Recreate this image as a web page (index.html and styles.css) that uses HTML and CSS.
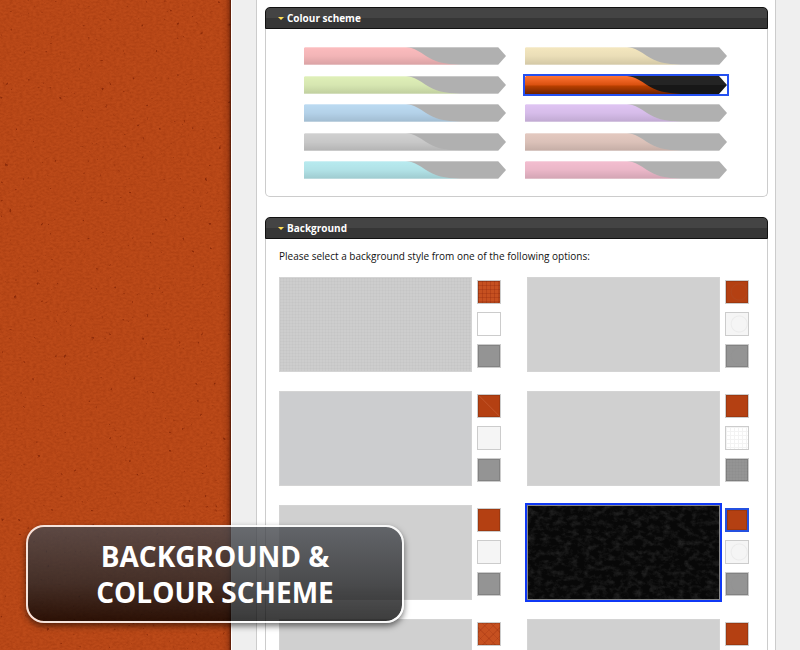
FILE: index.html
```html
<!DOCTYPE html>
<html lang="en">
<head>
<meta charset="utf-8">
<title>Background &amp; colour scheme</title>
<link rel="stylesheet" href="styles.css">
</head>
<body>
<svg class="defs" aria-hidden="true">
  <defs>
    <linearGradient id="shade" x1="0" y1="0" x2="0" y2="1">
      <stop offset="0" stop-color="#000" stop-opacity="0"/>
      <stop offset=".5" stop-color="#000" stop-opacity=".04"/>
      <stop offset="1" stop-color="#000" stop-opacity=".14"/>
    </linearGradient>
    <linearGradient id="ember" x1="0" y1="0" x2="0" y2="1">
      <stop offset="0" stop-color="#ff7434"/>
      <stop offset=".5" stop-color="#d9500f"/>
      <stop offset=".55" stop-color="#b84000"/>
      <stop offset="1" stop-color="#6e2200"/>
    </linearGradient>
    <linearGradient id="coal" x1="0" y1="0" x2="0" y2="1">
      <stop offset=".5" stop-color="#242424"/>
      <stop offset=".5" stop-color="#171717"/>
    </linearGradient>
    <filter id="grain" x="0" y="0" width="100%" height="100%" color-interpolation-filters="sRGB">
      <feTurbulence type="fractalNoise" baseFrequency=".3 .5" numOctaves="2" seed="4"/>
      <feColorMatrix values="0 0 0 0 .5  0 0 0 0 .13  0 0 0 0 0  1.2 0 0 0 -.4"/>
    </filter>
    <filter id="speck" x="0" y="0" width="100%" height="100%" color-interpolation-filters="sRGB">
      <feTurbulence type="fractalNoise" baseFrequency=".22" numOctaves="2" seed="21"/>
      <feColorMatrix values="0 0 0 0 .45  0 0 0 0 .1  0 0 0 0 0  9 0 0 0 -6.7"/>
    </filter>
    <filter id="leather" x="0" y="0" width="100%" height="100%" color-interpolation-filters="sRGB">
      <feTurbulence type="fractalNoise" baseFrequency=".14 .2" numOctaves="4" seed="3"/>
      <feColorMatrix values="0 0 0 0 .4  0 0 0 0 .4  0 0 0 0 .4  1.2 0 0 0 -.5"/>
    </filter>
    <symbol id="ribbon" viewBox="0 0 202 18" preserveAspectRatio="none">
      <path fill="#b0b0b0" d="M90 0H194L202 9L194 18H90Z"/>
      <path fill="currentColor" d="M0 1L1 0H102C111 1 116 5 122 9C131 15 140 17 156 18H0Z"/>
      <path fill="url(#shade)" d="M0 1L1 0H102C111 1 116 5 122 9C131 15 140 17 156 18H0Z"/>
      <path fill="#fff" fill-opacity=".3" d="M0 0H194L195 1H0ZM0 17H195L194 18H0Z"/>
    </symbol>
    <symbol id="ribbon-active" viewBox="0 0 202 18" preserveAspectRatio="none">
      <path fill="url(#coal)" d="M90 0H194L202 9L194 18H90Z"/>
      <path fill="url(#ember)" d="M0 1L1 0H102C111 1 116 5 122 9C131 15 140 17 156 18H0Z"/>
    </symbol>
  </defs>
</svg>

<div class="app">
  <aside class="backdrop">
    <svg class="texture" aria-hidden="true">
      <rect width="100%" height="100%" filter="url(#grain)" opacity=".4"/>
      <rect width="100%" height="100%" filter="url(#speck)" opacity=".6"/>
    </svg>
  </aside>

  <main class="stage">
    <div class="sheet">
      <section class="panel">
        <h2 class="panel-title"><button type="button" aria-expanded="true">Colour scheme</button></h2>
        <div class="schemes">
          <button type="button" class="scheme red" aria-label="Red"><svg><use href="#ribbon"/></svg></button>
          <button type="button" class="scheme sand" aria-label="Sand"><svg><use href="#ribbon"/></svg></button>
          <button type="button" class="scheme green" aria-label="Green"><svg><use href="#ribbon"/></svg></button>
          <button type="button" class="scheme selected" aria-label="Orange" aria-pressed="true"><svg><use href="#ribbon-active"/></svg></button>
          <button type="button" class="scheme blue" aria-label="Blue"><svg><use href="#ribbon"/></svg></button>
          <button type="button" class="scheme violet" aria-label="Violet"><svg><use href="#ribbon"/></svg></button>
          <button type="button" class="scheme silver" aria-label="Silver"><svg><use href="#ribbon"/></svg></button>
          <button type="button" class="scheme brown" aria-label="Brown"><svg><use href="#ribbon"/></svg></button>
          <button type="button" class="scheme aqua" aria-label="Aqua"><svg><use href="#ribbon"/></svg></button>
          <button type="button" class="scheme pink" aria-label="Pink"><svg><use href="#ribbon"/></svg></button>
        </div>
      </section>

      <section class="panel">
        <h2 class="panel-title"><button type="button" aria-expanded="true">Background</button></h2>
        <div class="backgrounds">
          <p>Please select a background style from one of the following options:</p>
          <div class="options">
            <div class="option">
              <button type="button" class="preview weave" aria-label="Weave"></button>
              <div class="swatches">
                <button type="button" class="swatch orange weave" aria-label="Weave, orange"></button>
                <button type="button" class="swatch white" aria-label="Weave, white"></button>
                <button type="button" class="swatch grey" aria-label="Weave, grey"></button>
              </div>
            </div>
            <div class="option">
              <button type="button" class="preview pale" aria-label="Honeycomb"></button>
              <div class="swatches">
                <button type="button" class="swatch rust hex" aria-label="Honeycomb, orange"></button>
                <button type="button" class="swatch light hex" aria-label="Honeycomb, white"></button>
                <button type="button" class="swatch grey hex" aria-label="Honeycomb, grey"></button>
              </div>
            </div>
            <div class="option">
              <button type="button" class="preview cool" aria-label="Facets"></button>
              <div class="swatches">
                <button type="button" class="swatch rust crease" aria-label="Facets, orange"></button>
                <button type="button" class="swatch light" aria-label="Facets, white"></button>
                <button type="button" class="swatch grey" aria-label="Facets, grey"></button>
              </div>
            </div>
            <div class="option">
              <button type="button" class="preview pale" aria-label="Linen"></button>
              <div class="swatches">
                <button type="button" class="swatch rust" aria-label="Linen, orange"></button>
                <button type="button" class="swatch white grid" aria-label="Linen, white"></button>
                <button type="button" class="swatch grey weave" aria-label="Linen, grey"></button>
              </div>
            </div>
            <div class="option">
              <button type="button" class="preview pale" aria-label="Paper"></button>
              <div class="swatches">
                <button type="button" class="swatch rust" aria-label="Paper, orange"></button>
                <button type="button" class="swatch light" aria-label="Paper, white"></button>
                <button type="button" class="swatch grey" aria-label="Paper, grey"></button>
              </div>
            </div>
            <div class="option">
              <button type="button" class="preview dark selected" aria-label="Leather" aria-pressed="true">
                <svg class="texture" aria-hidden="true"><rect width="100%" height="100%" filter="url(#leather)" opacity=".5"/></svg>
              </button>
              <div class="swatches">
                <button type="button" class="swatch rust selected" aria-label="Leather, orange" aria-pressed="true"></button>
                <button type="button" class="swatch light hex" aria-label="Leather, white"></button>
                <button type="button" class="swatch grey hex" aria-label="Leather, grey"></button>
              </div>
            </div>
            <div class="option">
              <button type="button" class="preview pale" aria-label="Diamonds"></button>
              <div class="swatches">
                <button type="button" class="swatch orange diamond" aria-label="Diamonds, orange"></button>
                <button type="button" class="swatch light" aria-label="Diamonds, white"></button>
                <button type="button" class="swatch grey" aria-label="Diamonds, grey"></button>
              </div>
            </div>
            <div class="option">
              <button type="button" class="preview pale" aria-label="Canvas"></button>
              <div class="swatches">
                <button type="button" class="swatch rust" aria-label="Canvas, orange"></button>
                <button type="button" class="swatch light" aria-label="Canvas, white"></button>
                <button type="button" class="swatch grey" aria-label="Canvas, grey"></button>
              </div>
            </div>
          </div>
        </div>
      </section>
    </div>
  </main>

  <h1 class="caption">Background &amp;<br>colour scheme</h1>
</div>
</body>
</html>
```
FILE: styles.css
```css
* {
  box-sizing: border-box;
}

body {
  margin: 0;
  font-family: "Open Sans", "Noto Sans", sans-serif;
  font-size: 10px;
  color: #111;
}

button {
  display: block;
  margin: 0;
  padding: 0;
  border: 0;
  background: none;
  font: inherit;
  color: inherit;
  cursor: pointer;
}

.defs {
  position: absolute;
  width: 0;
  height: 0;
}

.app {
  position: relative;
  display: flex;
  height: 100vh;
  overflow: hidden;
}

/* Textured area left of the sheet */
.backdrop {
  position: relative;
  flex: 0 0 29%;
  border-right: 1px solid #fff;
  background: #bc4a19;
}

.backdrop::after {
  content: "";
  position: absolute;
  inset: 0;
  background: linear-gradient(to left, rgba(50, 10, 0, .75), rgba(70, 15, 0, .3) 2px, rgba(80, 20, 0, .1) 5px, transparent 10px);
}

.texture {
  position: absolute;
  inset: 0;
  width: 100%;
  height: 100%;
}

.stage {
  flex: 1;
  padding: 0 24px;
  background: #efefef;
}

.sheet {
  display: flex;
  flex-direction: column;
  gap: 20px;
  min-height: 100%;
  padding: 7px 7px 20px 8px;
  border: solid #ccc;
  border-width: 0 1px;
  background: #fff;
}

/* Panels */
.panel {
  border: 1px solid #ccc;
  border-top: 0;
  border-radius: 5px;
}

.panel-title {
  margin: 0 -1px;
  border: 1px solid #111;
  border-radius: 5px 5px 0 0;
  background: linear-gradient(#444 50%, #363636 50%);
  color: #fff;
  font-size: 10px;
  line-height: 20px;
}

.panel-title button {
  display: flex;
  align-items: center;
  gap: 3px;
  width: 100%;
  padding: 0 12px;
}

.panel-title button::before {
  content: "";
  border: 3px solid transparent;
  border-top-color: #fd5;
  border-bottom: 0;
}

.schemes {
  display: grid;
  grid-template-columns: repeat(2, 202px);
  justify-content: center;
  align-content: space-between;
  column-gap: 19px;
  height: 167px;
  padding: 18px 2px 17px 0;
}

.scheme svg {
  display: block;
  width: 100%;
  height: 18px;
}

.scheme.selected {
  outline: 2px solid #2450f0;
}

.red { color: #fcbcbe; }
.sand { color: #f4e7bf; }
.green { color: #dff0b8; }
.blue { color: #bbdaf2; }
.violet { color: #dfc4f3; }
.silver { color: #d0d0d0; }
.brown { color: #e4c9c0; }
.aqua { color: #b8ebf0; }
.pink { color: #f4bed0; }

/* Background picker */
.backgrounds {
  padding: 10px 13px 14px;
}

.backgrounds p {
  margin: 0 0 13px;
  line-height: 15px;
}

.options {
  display: grid;
  grid-template-columns: repeat(2, 222px);
  gap: 19px 26px;
}

.option {
  display: flex;
  gap: 5px;
}

.preview {
  position: relative;
  flex: 1;
  height: 95px;
  border: 1px solid #d4d4d4;
  background-color: #cdcdcd;
}

.swatches {
  display: flex;
  flex-direction: column;
  justify-content: space-between;
  padding: 3px 0 4px;
}

.swatch {
  width: 24px;
  height: 24px;
  border: 1px solid #ccc;
  box-shadow: inset 0 0 0 1px rgba(0, 0, 0, .12);
}

.orange { background-color: #c65020; }
.rust { background-color: #b44012; }
.white { background-color: #fff; box-shadow: none; }
.light { background-color: #f5f5f5; box-shadow: none; }
.grey { background-color: #949494; }
.cool { background-color: #cccdcf; }
.pale { background-color: #d0d0d0; }

.dark {
  border-color: #888;
  background-color: #080808;
}

.preview.selected {
  outline: 2px solid #0f38f5;
}

.swatch.selected {
  border: 2px solid #2450e0;
  outline: 1px solid #2450e0;
  outline-offset: -1px;
}

.weave {
  background-image:
    repeating-linear-gradient(rgba(0, 0, 0, .02) 0 1px, transparent 1px 3px),
    repeating-linear-gradient(to right, rgba(0, 0, 0, .02) 0 1px, transparent 1px 3px);
}

.orange.weave {
  background-image:
    repeating-linear-gradient(rgba(120, 20, 0, .2) 0 1px, transparent 1px 4px),
    repeating-linear-gradient(to right, rgba(120, 20, 0, .2) 0 1px, transparent 1px 4px);
}

.grid {
  background-image:
    repeating-linear-gradient(#f3f3f3 0 1px, transparent 1px 4px),
    repeating-linear-gradient(to right, #f3f3f3 0 1px, transparent 1px 4px);
}

.hex {
  background-image: radial-gradient(circle at 60% 50%, transparent 7px, rgba(128, 128, 128, .08) 8px, transparent 9px);
}

.crease {
  background-image: linear-gradient(45deg, transparent 49%, rgba(210, 110, 70, .3) 50%, transparent 54%);
}

.diamond {
  background-image:
    repeating-linear-gradient(45deg, rgba(120, 20, 0, .14) 0 1px, transparent 1px 6px),
    repeating-linear-gradient(-45deg, rgba(120, 20, 0, .14) 0 1px, transparent 1px 6px);
}

/* Caption floating over the page */
.caption {
  position: absolute;
  left: 26px;
  bottom: 27px;
  width: 378px;
  margin: 0;
  padding: 11px 0;
  border: 2px solid rgba(255, 255, 255, .85);
  border-radius: 18px;
  background: linear-gradient(rgba(70, 73, 79, .8), rgba(40, 41, 43, .8) 60%, rgba(0, 0, 0, .76)) padding-box;
  box-shadow: 0 3px 6px rgba(0, 0, 0, .55);
  color: #fff;
  font-size: 28px;
  line-height: 36px;
  text-align: center;
  text-transform: uppercase;
}
```
